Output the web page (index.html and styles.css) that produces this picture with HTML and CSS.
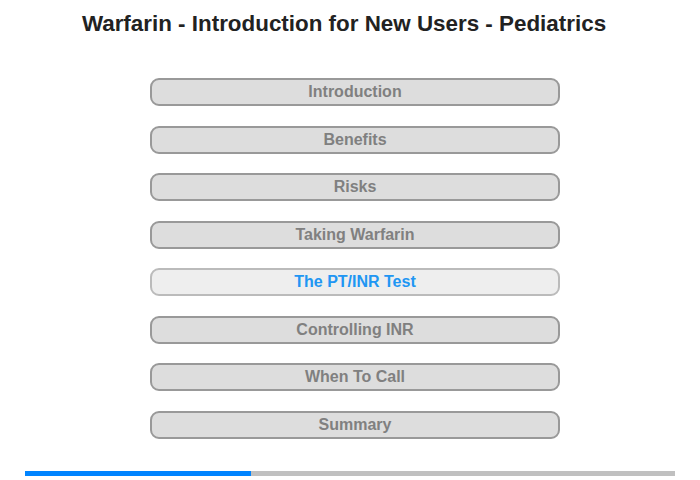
FILE: index.html
```html
<!DOCTYPE html>
<html>
<head>
<meta charset="utf-8">
<link rel="stylesheet" href="styles.css">
</head>
<body>
<div class="page">
  <h1 class="title">Warfarin - Introduction for New Users - Pediatrics</h1>
  <nav class="menu">
    <div class="item">Introduction</div>
    <div class="item">Benefits</div>
    <div class="item">Risks</div>
    <div class="item">Taking Warfarin</div>
    <div class="item active">The PT/INR Test</div>
    <div class="item">Controlling INR</div>
    <div class="item">When To Call</div>
    <div class="item">Summary</div>
  </nav>
  <div class="progress"><div class="progress-fill" style="width:226px"></div></div>
</div>
</body>
</html>
```
FILE: styles.css
```css
html, body {
  margin: 0;
  padding: 0;
  background: #fff;
}
.page {
  width: 700px;
  height: 480px;
  font-family: "Liberation Sans", Arial, sans-serif;
  display: flex;
  flex-direction: column;
}
.title {
  margin: 11px 0 0 0;
  font-size: 22.4px;
  line-height: 26px;
  font-weight: bold;
  color: #222;
  text-align: center;
  padding-right: 12px;
}
.menu {
  margin: 41px 0 0 150px;
  width: 410px;
  display: flex;
  flex-direction: column;
  gap: 19.5px;
}
.item {
  box-sizing: border-box;
  height: 28px;
  border: 2px solid #999;
  border-radius: 9px;
  background: #ddd;
  color: #808080;
  font-size: 16px;
  font-weight: bold;
  line-height: 24px;
  text-align: center;
}
.item.active {
  background: #eee;
  border-color: #bbb;
  color: #2196f3;
}
.progress {
  margin: 32.5px 0 0 25px;
  width: 650px;
  height: 5px;
  background: #c0c0c0;
}
.progress-fill {
  height: 5px;
  background: #0084ff;
}
```
